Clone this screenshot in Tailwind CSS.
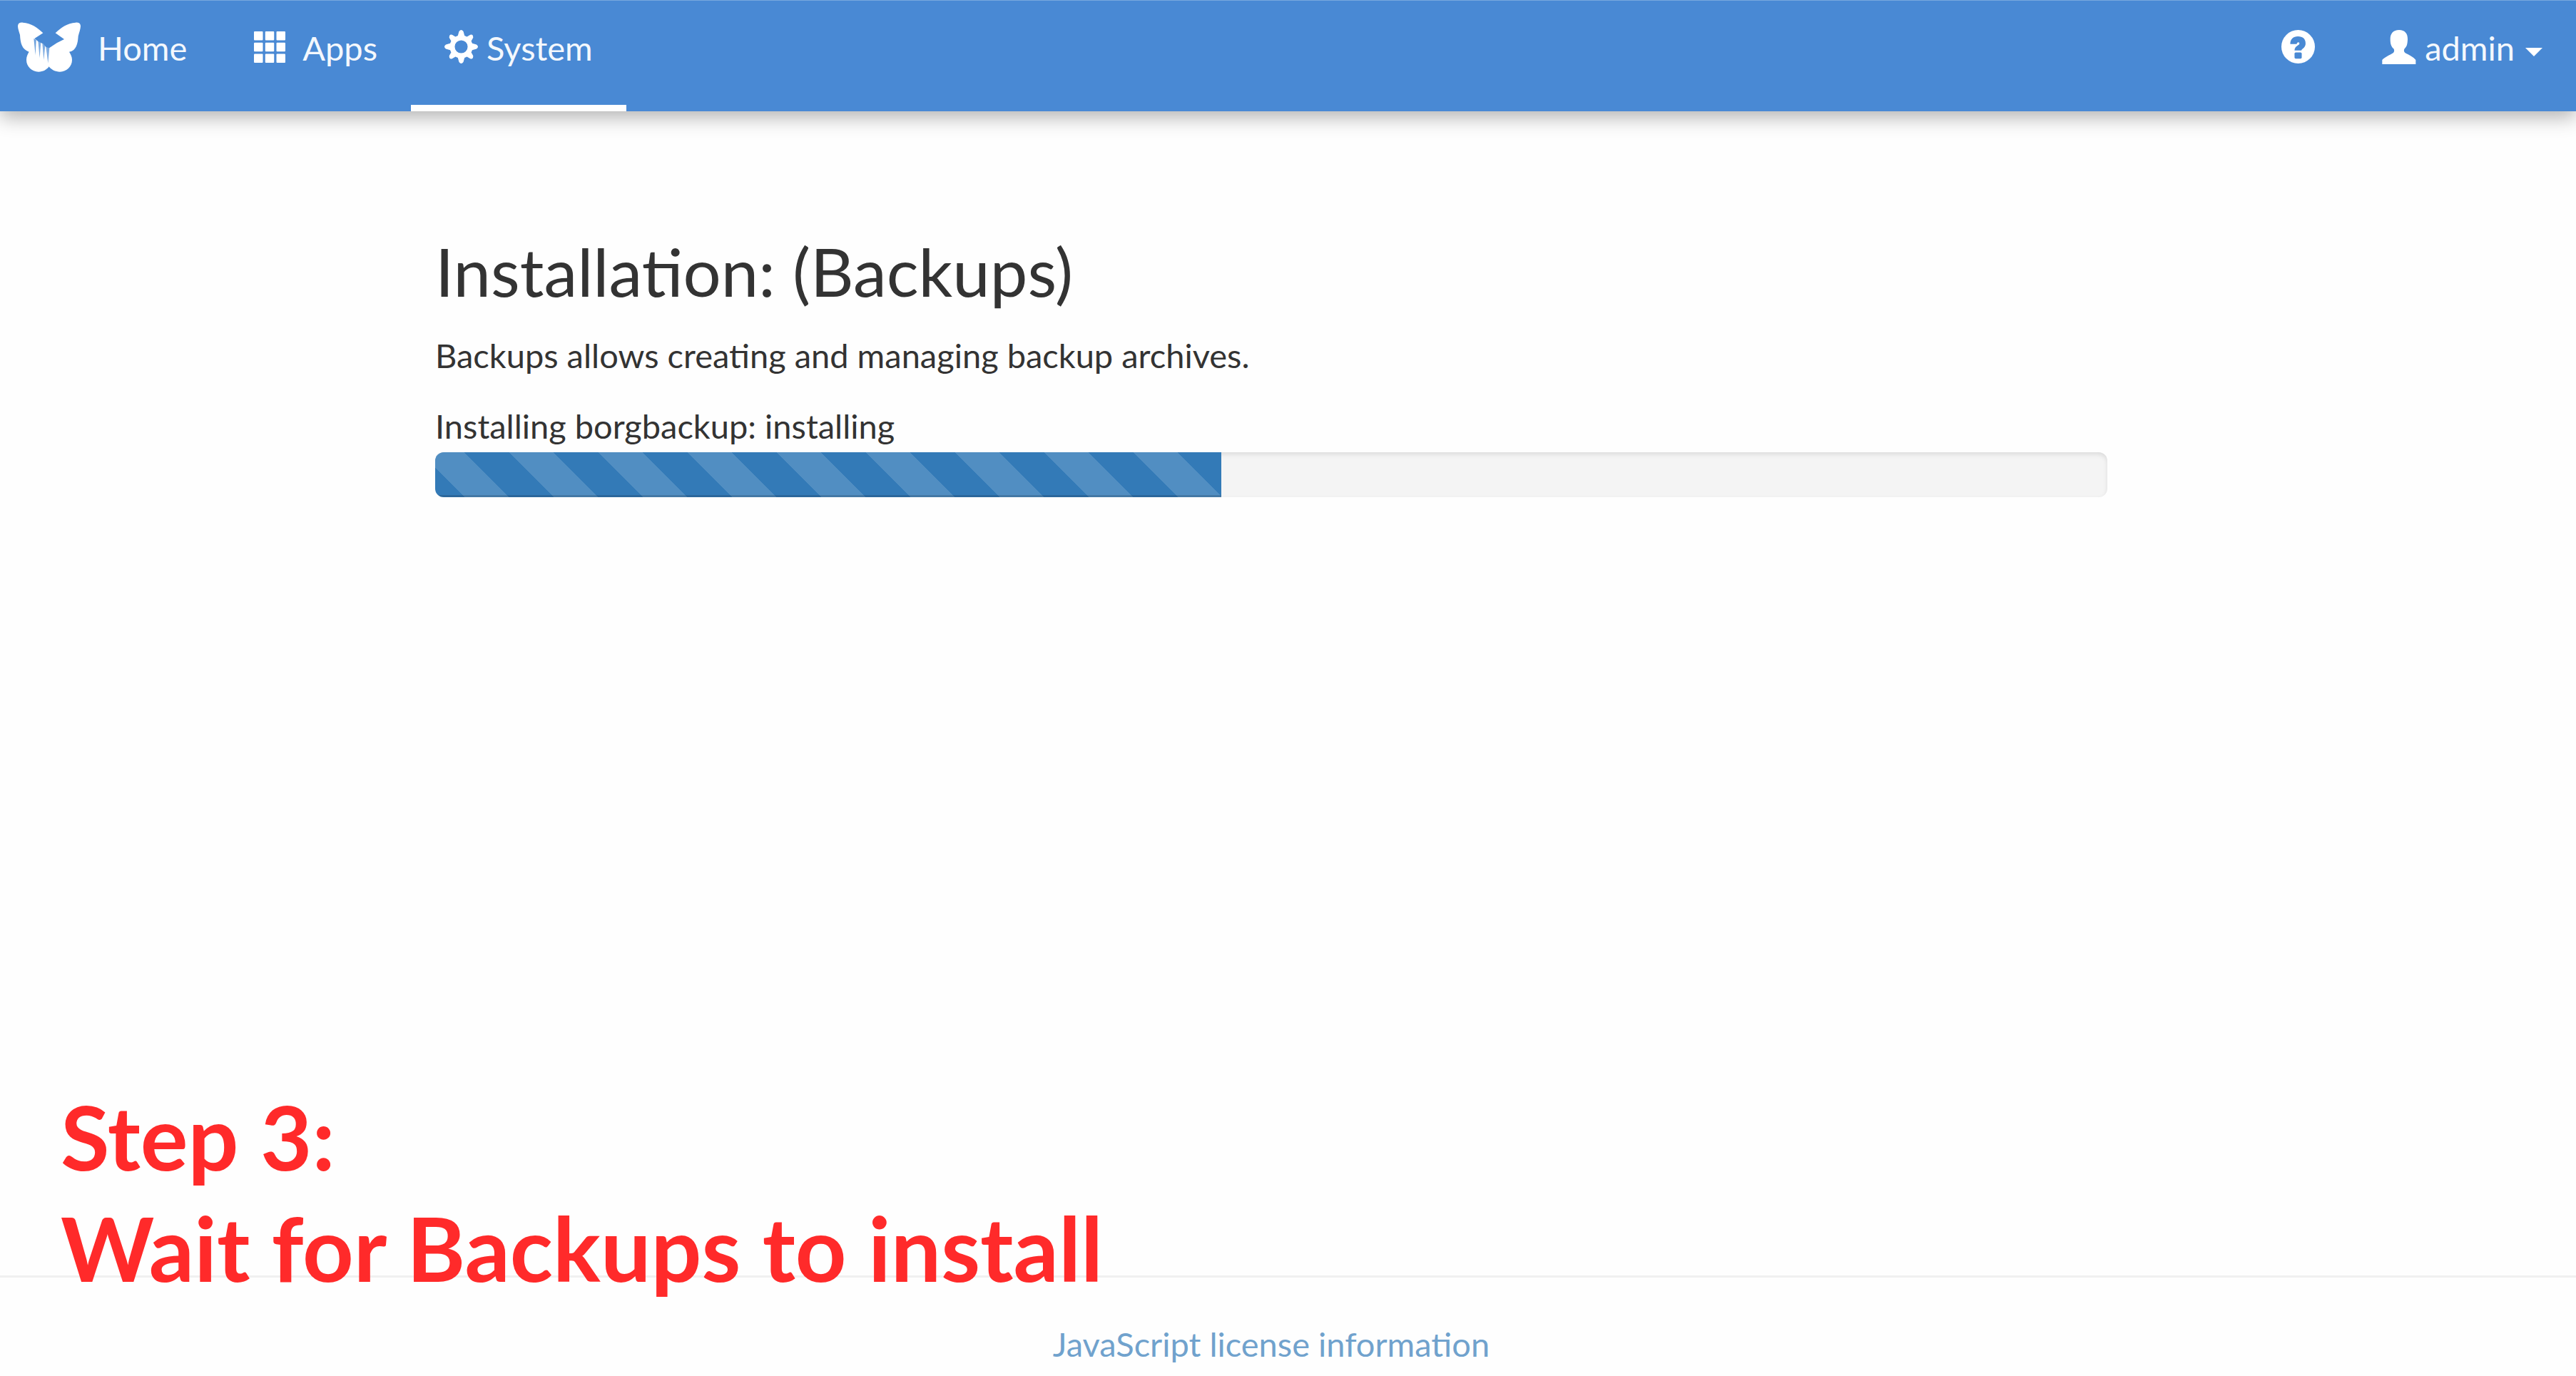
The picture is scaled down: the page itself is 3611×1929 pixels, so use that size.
<!DOCTYPE html>
<html lang="en">
<head>
<meta charset="utf-8">
<meta name="viewport" content="width=device-width, initial-scale=1">
<title>Installation: (Backups)</title>
<script src="https://cdn.jsdelivr.net/npm/@tailwindcss/browser@4"></script>
</head>
<body class="relative flex min-h-screen flex-col bg-[#fefefe] font-['Lato',sans-serif] text-[47px] leading-[66px] text-[#333333]">

<header class="border-t border-[#78a8de] bg-[#4989d4] pr-[47px] shadow-[0_9px_25px_rgba(0,0,0,0.29)]">
  <nav class="flex h-[155px] items-stretch text-[#f4f8fd]" aria-label="Main">
    <a href="#" class="flex items-center gap-[24px] border-b-9 border-transparent pr-[47px] pb-[17px] pl-[25px]">
      <svg class="h-[70px] w-[88px]" viewBox="75 92 264 208" fill="#fff" aria-hidden="true">
        <path d="M75 107C76 96 84 92 96 93C130 95 160 115 181 137L145 160L160 172L180 182L194 196L207 200L240 178L270 163L233 137C254 115 284 95 318 93C330 92 338 96 339 107C339 120 333 135 329 150C327 180 322 210 291 216C297 226 303 236 303 250C303 278 280 300 252 300C233 300 216 292 206 278C196 292 181 300 162 300C134 300 111 278 111 250C111 236 116 226 122 216C92 205 86 180 84 145C80 130 75 120 75 107Z"/>
        <g fill="#4989d4">
          <path d="M142 160L152 167L149 230Z" opacity=".8"/>
          <path d="M160 170L172 176L167 242Z" opacity=".7"/>
          <path d="M178 180L190 190L184 250Z" opacity=".7"/>
          <path d="M193 193L208 198L202 264Z" opacity=".7"/>
        </g>
      </svg>
      <span class="pt-[3px]">Home</span>
    </a>
    <a href="#" class="flex items-center gap-[24px] border-b-9 border-transparent px-[47px] pb-[17px]">
      <svg class="size-[44px]" viewBox="0 0 44 44" fill="#fff" aria-hidden="true">
        <rect width="12.5" height="12.5" rx="1"/><rect x="15.75" width="12.5" height="12.5" rx="1"/><rect x="31.5" width="12.5" height="12.5" rx="1"/>
        <rect y="15.75" width="12.5" height="12.5" rx="1"/><rect x="15.75" y="15.75" width="12.5" height="12.5" rx="1"/><rect x="31.5" y="15.75" width="12.5" height="12.5" rx="1"/>
        <rect y="31.5" width="12.5" height="12.5" rx="1"/><rect x="15.75" y="31.5" width="12.5" height="12.5" rx="1"/><rect x="31.5" y="31.5" width="12.5" height="12.5" rx="1"/>
      </svg>
      <span class="pt-[3px]">Apps</span>
    </a>
    <a href="#" aria-current="page" class="flex items-center gap-[12px] border-b-9 border-white px-[47px] pb-[17px]">
      <svg class="size-[47px]" viewBox="-70 -70 140 140" fill="#fff" aria-hidden="true">
        <path fill-rule="evenodd" d="M-9 -64Q0 -76 9 -64L14 -46L24 -42L38 -50Q50 -54 50 -38L42 -24L46 -14L64 -9Q76 0 64 9L46 14L42 24L50 38Q50 54 38 50L24 42L14 46L9 64Q0 76 -9 64L-14 46L-24 42L-38 50Q-50 54 -50 38L-42 24L-46 14L-64 9Q-76 0 -64 -9L-46 -14L-42 -24L-50 -38Q-50 -54 -38 -50L-24 -42L-14 -46ZM0 -27A27 27 0 1 0 0 27A27 27 0 1 0 0 -27Z"/>
      </svg>
      <span class="pt-[3px]">System</span>
    </a>
    <a href="#" aria-label="Help" class="ml-auto flex items-center border-b-9 border-transparent px-[47px] pb-[17px]">
      <svg class="size-[47px]" viewBox="145 122 140 140" fill="none" aria-hidden="true">
        <circle cx="215" cy="192" r="70" fill="#fff"/>
        <path d="M182 181C182 160 195 149 214 149C235 149 246 160 246 178C246 192 238 198 231 203C229 205 229 206 229 208H200C200 198 204 193 211 188C217 184 222 181 220 176C218 172 211 173 209 181Z" fill="#4989d4"/>
        <rect x="200" y="216" width="30" height="26" rx="5" fill="#4989d4"/>
      </svg>
    </a>
    <button type="button" aria-haspopup="true" class="flex items-center border-b-9 border-transparent pb-[17px] pl-[47px]">
      <svg class="mr-[12px] size-[48px]" viewBox="566 120 144 144" fill="#fff" aria-hidden="true">
        <path d="M638 120C663 120 675 136 674 160C673 181 671 189 661 199C658 203 657 211 663 216C680 225 700 235 708 246V264H567V246C578 234 598 226 614 216C619 211 618 203 615 199C605 189 601 180 601 158C601 136 613 120 638 120Z"/>
      </svg>
      <span class="pt-[3px]">admin</span>
      <svg class="mt-[14px] ml-[15px] h-[12px] w-[24px]" viewBox="0 0 24 12" fill="#fff" aria-hidden="true"><path d="M0 0H24L12 12Z"/></svg>
    </button>
  </nav>
</header>

<main class="flex-1 pt-[167px] pr-[47px]">
  <div class="mx-auto w-[calc(100%-1220px)] min-w-[1200px]">
    <h2 class="text-[94px] leading-[113px]">Installation: (Backups)</h2>
    <p class="mt-[29px]">Backups allows creating and managing backup archives.</p>
    <div class="mt-[33px]" id="status">Installing borgbackup: installing</div>
    <div role="progressbar" aria-labelledby="status" aria-valuenow="47" aria-valuemin="0" aria-valuemax="100" class="mt-[4px] h-[63px] overflow-hidden rounded-[12px] bg-[#f4f4f4] shadow-[inset_0_3px_6px_rgba(0,0,0,0.1)]">
      <div class="h-full bg-[#337ab7] bg-[linear-gradient(45deg,rgba(255,255,255,0.15)_25%,transparent_25%,transparent_50%,rgba(255,255,255,0.15)_50%,rgba(255,255,255,0.15)_75%,transparent_75%,transparent)] bg-[length:125px_125px] bg-[position:-22px_0] shadow-[inset_0_-3px_0_rgba(0,0,0,0.15)]" style="width: 47%"></div>
    </div>
  </div>
</main>

<footer class="border-t-3 border-[#f0f0f0] pt-[60px] pr-[47px] pb-[12px] text-center">
  <a href="#" class="text-[#70a2cd]">JavaScript license information</a>
</footer>

<!-- Tutorial caption over the page -->
<p class="absolute bottom-[102px] left-[85px] text-[125px] leading-[156px] font-bold text-[#ff2a2a]">Step 3:<br>Wait for Backups to install</p>

</body>
</html>
